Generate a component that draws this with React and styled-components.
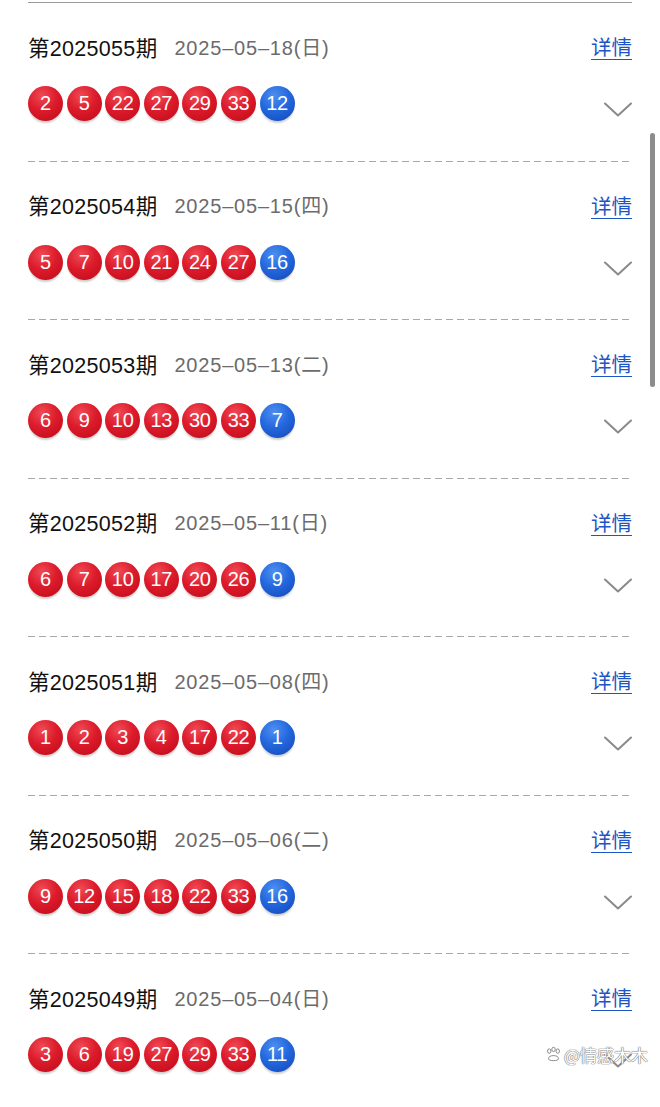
import React from 'react';
import styled, { createGlobalStyle, css } from 'styled-components';

const GlobalStyle = createGlobalStyle`
    html, body {
        margin: 0;
        padding: 0;
        background: #fff;
    }
    body {
        font-family: "Liberation Sans", "Noto Sans CJK SC", sans-serif;
    }
`;

const Page = styled.div`
    position: relative;
    width: 660px;
    height: 1107px;
    overflow: hidden;
    background: #fff;
`;

const List = styled.div`
    padding: 2px 28px 0;
`;

const Divider = styled.div`
    height: 1px;
    background-image: linear-gradient(to right, #a8a8a8 62%, transparent 0);
    background-size: 11px 1px;
    background-repeat: repeat-x;

    ${props => props.solid && css`
        background: #9a9a9a;
    `}
`;

const Row = styled.div`
    padding-bottom: 39.5px;
`;

const Header = styled.div`
    display: flex;
    align-items: center;
    height: 30px;
    margin-top: 28px;
`;

const Issue = styled.span`
    font-size: 21.5px;
    color: #111;
    letter-spacing: 0.3px;
`;

const DateText = styled.span`
    margin-left: 17px;
    font-size: 20px;
    color: #6b6b6b;
    letter-spacing: 0.8px;
`;

const Detail = styled.a`
    margin-left: auto;
    font-size: 20.5px;
    color: #1d56c4;
    text-decoration: underline;
    text-underline-offset: 4px;
    text-decoration-thickness: 1px;
`;

const BallRow = styled.div`
    display: flex;
    align-items: center;
    margin-top: 25px;
    height: 35px;
`;

const Balls = styled.div`
    display: flex;
    gap: 3.6px;
`;

const Ball = styled.span`
    width: 35px;
    height: 35px;
    border-radius: 50%;
    display: flex;
    align-items: center;
    justify-content: center;
    color: #fff;
    font-family: "Liberation Sans", sans-serif;
    font-size: 20px;
    letter-spacing: -0.3px;
    background: radial-gradient(circle at 40% 28%, #f04a55 0%, #dc1b2b 45%, #c8101f 80%, #b80c1a 100%);
    box-shadow: 0 3px 2px -1px rgba(0, 0, 0, 0.2);

    ${props => props.blue && css`
        background: radial-gradient(circle at 40% 28%, #4f8ff0 0%, #2468de 45%, #1852c4 80%, #1346ad 100%);
    `}
`;

const Chevron = styled.svg`
    margin-left: auto;
    margin-top: 12px;
    width: 28px;
    height: 15px;
`;

const Scrollbar = styled.div`
    position: absolute;
    left: 650px;
    top: 133px;
    width: 5px;
    height: 254px;
    border-radius: 3px;
    background: #8c8c8c;
`;

const Watermark = styled.div`
    position: absolute;
    right: 12px;
    top: 1042px;
    display: flex;
    align-items: center;
    gap: 2px;
    font-family: "Noto Sans CJK SC", sans-serif;
    font-size: 17px;
    color: #fff;
    text-shadow: 0 0 1px #777, 0 0 1px #777, 0 0 1px #777;
`;

const draws = [
    { issue: '2025055', date: '2025–05–18(日)', red: [2, 5, 22, 27, 29, 33], blue: 12 },
    { issue: '2025054', date: '2025–05–15(四)', red: [5, 7, 10, 21, 24, 27], blue: 16 },
    { issue: '2025053', date: '2025–05–13(二)', red: [6, 9, 10, 13, 30, 33], blue: 7 },
    { issue: '2025052', date: '2025–05–11(日)', red: [6, 7, 10, 17, 20, 26], blue: 9 },
    { issue: '2025051', date: '2025–05–08(四)', red: [1, 2, 3, 4, 17, 22], blue: 1 },
    { issue: '2025050', date: '2025–05–06(二)', red: [9, 12, 15, 18, 22, 33], blue: 16 },
    { issue: '2025049', date: '2025–05–04(日)', red: [3, 6, 19, 27, 29, 33], blue: 11 },
];

const DrawRow = ({ issue, date, red, blue, first }) => (
    <Row>
        <Divider solid={first} />
        <Header>
            <Issue>第{issue}期</Issue>
            <DateText>{date}</DateText>
            <Detail href="#">详情</Detail>
        </Header>
        <BallRow>
            <Balls>
                {red.map((n, i) => <Ball key={i}>{n}</Ball>)}
                <Ball blue>{blue}</Ball>
            </Balls>
            <Chevron viewBox="0 0 28 15" fill="none">
                <path d="M1 1.5 L14 13.5 L27 1.5" stroke="#8a8a8a" strokeWidth="2" strokeLinecap="round" strokeLinejoin="round" />
            </Chevron>
        </BallRow>
    </Row>
);

export default function App() {
    return (
        <Page>
            <GlobalStyle />
            <List>
                {draws.map((d, i) => <DrawRow key={d.issue} first={i === 0} {...d} />)}
            </List>
            <Scrollbar />
            <Watermark>
                <svg width="17" height="17" viewBox="0 0 20 20" fill="#fff" stroke="#777" strokeWidth="1">
                    <ellipse cx="5" cy="6" rx="2" ry="2.6" />
                    <ellipse cx="10" cy="4" rx="2" ry="2.6" />
                    <ellipse cx="15" cy="6" rx="2" ry="2.6" />
                    <path d="M4 15 C4 10 16 10 16 15 C16 18 4 18 4 15 Z" />
                </svg>
                <span>@情感木木</span>
            </Watermark>
        </Page>
    );
}
